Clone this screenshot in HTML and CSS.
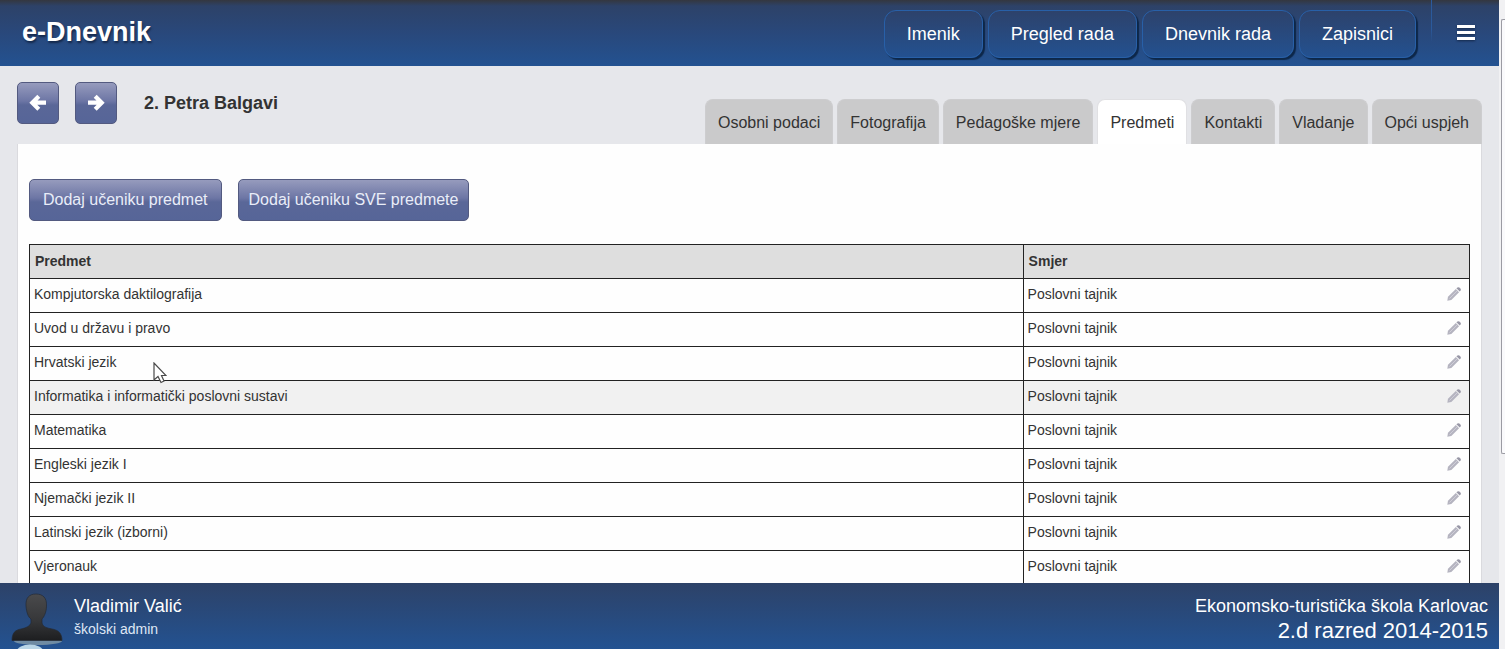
FILE: index.html
```
<!DOCTYPE html>
<html lang="hr">
<head>
<meta charset="utf-8">
<title>e-Dnevnik</title>
<link rel="stylesheet" href="styles.css">
</head>
<body>
<svg class="defs" aria-hidden="true">
  <symbol id="pencil" viewBox="0 0 14 14">
    <path d="M0.300 13.700 1 9.700 8.800 1.900 12.100 5.200 4.300 13Z" fill="#b5b4c0"/>
    <path d="M2.500 11.500 10.200 3.800" stroke="#cfced8" stroke-width="1"/>
    <path d="M9.400 1.300 10.500.4Q11.500-.2 12.400.6L13.400 1.600Q14.200 2.500 13.600 3.500L12.700 4.600Z" fill="#9897a6"/>
  </symbol>
</svg>
<div class="app">
  <header class="topbar">
    <h1 class="brand">e-Dnevnik</h1>
    <nav class="main-nav">
      <a href="#imenik">Imenik</a>
      <a href="#pregled">Pregled rada</a>
      <a href="#dnevnik">Dnevnik rada</a>
      <a href="#zapisnici">Zapisnici</a>
    </nav>
    <button class="menu" type="button" aria-label="Izbornik">
      <svg width="18" height="16" viewBox="0 0 18 16"><path d="M0 2.500h18M0 8.500h18M0 14.500h18" stroke="#fff" stroke-width="3"/></svg>
    </button>
  </header>

  <main class="content">
    <div class="student-bar">
      <div class="student">
        <button class="btn square" type="button" aria-label="Prethodni učenik">
          <svg width="18" height="18" viewBox="0 0 18 18"><path d="M9.800 2.200 3.300 8.700l6.500 6.500M4 8.700H17" fill="none" stroke="#fff" stroke-width="4.200"/></svg>
        </button>
        <button class="btn square" type="button" aria-label="Sljedeći učenik">
          <svg width="18" height="18" viewBox="0 0 18 18"><path d="M8.200 2.200 14.700 8.700l-6.500 6.500M14 8.700H1" fill="none" stroke="#fff" stroke-width="4.200"/></svg>
        </button>
        <h2 class="name">2. Petra Balgavi</h2>
      </div>
      <nav class="tabs">
        <a href="#osobni">Osobni podaci</a>
        <a href="#foto">Fotografija</a>
        <a href="#mjere">Pedagoške mjere</a>
        <a class="active" href="#predmeti" aria-current="page">Predmeti</a>
        <a href="#kontakti">Kontakti</a>
        <a href="#vladanje">Vladanje</a>
        <a href="#uspjeh">Opći uspjeh</a>
      </nav>
    </div>

    <section class="panel">
      <div class="actions">
        <button class="btn wide" type="button">Dodaj učeniku predmet</button>
        <button class="btn" type="button">Dodaj učeniku SVE predmete</button>
      </div>
      <table class="subjects">
        <thead><tr><th class="subject">Predmet</th><th>Smjer</th></tr></thead>
        <tbody>
          <tr><td>Kompjutorska daktilografija</td><td><div class="course">Poslovni tajnik<button type="button" aria-label="Uredi"><svg><use href="#pencil"/></svg></button></div></td></tr>
          <tr><td>Uvod u državu i pravo</td><td><div class="course">Poslovni tajnik<button type="button" aria-label="Uredi"><svg><use href="#pencil"/></svg></button></div></td></tr>
          <tr><td>Hrvatski jezik</td><td><div class="course">Poslovni tajnik<button type="button" aria-label="Uredi"><svg><use href="#pencil"/></svg></button></div></td></tr>
          <tr class="hover"><td>Informatika i informatički poslovni sustavi</td><td><div class="course">Poslovni tajnik<button type="button" aria-label="Uredi"><svg><use href="#pencil"/></svg></button></div></td></tr>
          <tr><td>Matematika</td><td><div class="course">Poslovni tajnik<button type="button" aria-label="Uredi"><svg><use href="#pencil"/></svg></button></div></td></tr>
          <tr><td>Engleski jezik I</td><td><div class="course">Poslovni tajnik<button type="button" aria-label="Uredi"><svg><use href="#pencil"/></svg></button></div></td></tr>
          <tr><td>Njemački jezik II</td><td><div class="course">Poslovni tajnik<button type="button" aria-label="Uredi"><svg><use href="#pencil"/></svg></button></div></td></tr>
          <tr><td>Latinski jezik (izborni)</td><td><div class="course">Poslovni tajnik<button type="button" aria-label="Uredi"><svg><use href="#pencil"/></svg></button></div></td></tr>
          <tr><td>Vjeronauk</td><td><div class="course">Poslovni tajnik<button type="button" aria-label="Uredi"><svg><use href="#pencil"/></svg></button></div></td></tr>
        </tbody>
      </table>
    </section>
  </main>

  <footer class="footer">
    <svg class="avatar" width="52" height="56" viewBox="0 0 52 56" aria-hidden="true">
      <defs><linearGradient id="person" x1="0" y1="0" x2="0" y2="1"><stop offset="0" stop-color="#4a4a4c"/><stop offset=".55" stop-color="#37383a"/><stop offset="1" stop-color="#1d1e20"/></linearGradient></defs>
      <ellipse cx="27" cy="48" rx="24" ry="4" fill="#6f8ba3"/>
      <path d="M25 1C32 1 36 5 35.500 13 35.500 19 33 24 31 26V30C32 34 36 35 41 36 47 37 51 40 51 47.500H1C1 40 4 37 10 36 15 35 19 33 20 30V26C17 24 15.500 19 15 13 14.500 5 18 1 25 1Z" fill="url(#person)" stroke="#242a33" stroke-width=".7"/>
      <ellipse cx="19" cy="58" rx="13" ry="6.500" fill="#b9d5e6"/>
    </svg>
    <div class="user"><div class="line">Vladimir Valić</div><div class="role">školski admin</div></div>
    <div class="school"><div class="line">Ekonomsko-turistička škola Karlovac</div><div class="class">2.d razred 2014-2015</div></div>
  </footer>
</div>
<div class="rail" aria-hidden="true"><div class="thumb"></div></div>
<svg class="cursor" width="14" height="22" viewBox="0 0 14 22" aria-hidden="true"><path d="M1 1V18L5 14.500 8 20.500 11 19 8.500 13.500H13Z" fill="#fff" stroke="#4a4a4a" stroke-width="1.200"/></svg>
</body>
</html>
```
FILE: styles.css
```
* { box-sizing: border-box; }
body {
  margin: 0;
  height: 100vh;
  display: flex;
  overflow: hidden;
  font: 16px "Liberation Sans", Arial, sans-serif;
  color: #333;
  background: #e6e7eb;
}
h1, h2 { margin: 0; }
a { color: inherit; text-decoration: none; }
button { font: inherit; cursor: pointer; }
.defs { position: absolute; width: 0; height: 0; }

.app { flex: 1; min-width: 0; display: flex; flex-direction: column; }

.topbar {
  flex: none;
  height: 66px;
  display: flex;
  align-items: flex-start;
  padding-left: 22px;
  color: #fff;
  background: linear-gradient(#34373f 0, #2d4268 6px, #29487b 50%, #235291 100%);
}
.brand {
  flex: 1;
  font-size: 27px;
  line-height: 64px;
  text-shadow: 1px 2px 2px #14284a;
}
.main-nav { display: flex; gap: 5px; padding-top: 10px; }
.main-nav a {
  padding: 0 22px;
  border: 1px solid #2860a8;
  border-radius: 12px;
  font-size: 18px;
  line-height: 46px;
  background: linear-gradient(#2d426b, #235190);
  box-shadow: 2px 2px 1px #0d2749;
}
.menu {
  width: 68px;
  height: 64px;
  margin-left: 15px;
  padding: 0;
  border: 0;
  border-left: 1px solid;
  border-image: linear-gradient(#2b5a9c, #2b5a9c 45%, transparent 66%) 1;
  background: none;
}
.menu svg { display: block; margin: auto; filter: drop-shadow(0 1px 1px #14284a); }

.content { flex: 1; min-height: 0; display: flex; flex-direction: column; padding: 0 17px; overflow: hidden; }
.student-bar { flex: none; height: 78px; display: flex; justify-content: space-between; align-items: flex-end; }
.student { align-self: flex-start; display: flex; align-items: center; gap: 16px; padding-top: 16px; }
.name { padding-left: 11px; font-size: 18px; }

.btn {
  height: 42px;
  padding: 0 10px;
  border: 1px solid #535a80;
  border-radius: 5px;
  color: #e9edf8;
  white-space: nowrap;
  background: linear-gradient(#969bbd 0, #6d76a5 45%, #5a6798 55%, #566598 100%);
}
.square { width: 42px; padding: 0; }
.square svg { display: block; margin: auto; }
.wide { padding: 0 13px; }

.tabs { display: flex; gap: 4px; }
.tabs a {
  height: 45px;
  padding: 0 12px;
  border: 1px solid #cdcdcf;
  border-bottom: 0;
  border-radius: 8px 8px 0 0;
  line-height: 45px;
  white-space: nowrap;
  background: #cacacb;
}
.tabs .active { border-color: #e0e0e3; background: #fff; }

.panel { flex: 1; padding: 35px 11px 0; border: 1px solid #dadade; border-width: 0 1px; background: #fefefe; }
.actions { display: flex; gap: 16px; margin-bottom: 23px; }

.subjects { width: 100%; border-collapse: collapse; font-size: 14px; table-layout: fixed; }
.subjects th, .subjects td { height: 34px; padding: 0 5px 3px 4px; border: 1px solid #222; text-align: left; }
.subjects th { padding: 0 5px 2px; background: #dedede; }
.subjects .subject { width: 69%; }
.hover { background: #f1f1f1; }
.course { display: flex; align-items: center; justify-content: space-between; }
.course button { padding: 0 3px; border: 0; background: none; }
.course svg { display: block; width: 14px; height: 14px; }

.footer {
  flex: none;
  height: 66px;
  display: flex;
  padding: 10px 11px 0;
  color: #fff;
  background: linear-gradient(#2d4268, #235291);
}
.avatar { flex: none; }
.user { padding-left: 11px; }
.line { font-size: 18px; line-height: 26px; }
.role { font-size: 14px; line-height: 20px; color: #dfe7f5; }
.school { margin-left: auto; text-align: right; }
.class { font-size: 22px; line-height: 24px; }

.rail { width: 6px; padding: 19px 0 0 2px; background: #f1f1f3; }
.thumb { height: 67vh; border: 1px solid #9b9ba3; border-right: 0; border-radius: 2px 0 0 2px; background: #fafafc; }
.cursor { position: absolute; left: 153px; top: 362px; }
```
